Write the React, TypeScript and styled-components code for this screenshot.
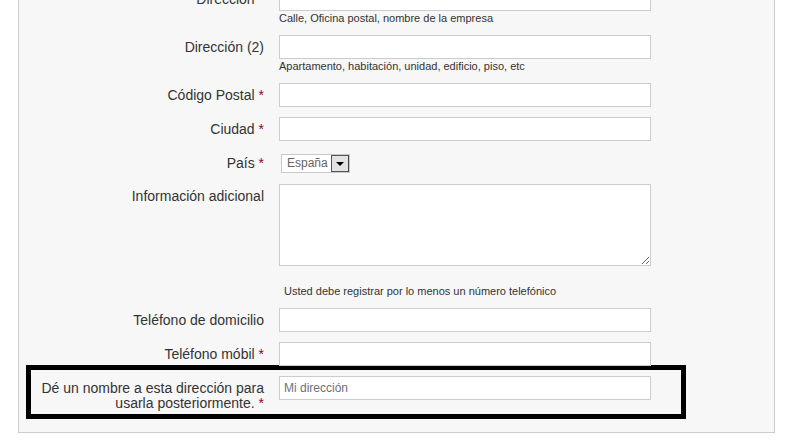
import styled, { createGlobalStyle } from 'styled-components';

const GlobalStyle = createGlobalStyle`
  html, body {
    margin: 0;
    padding: 0;
    background: #fff;
    overflow: hidden;
    font-family: "Liberation Sans", Arial, sans-serif;
  }
`;

const Page = styled.div`
  padding-left: 18px;
`;

const Panel = styled.div`
  box-sizing: border-box;
  width: 757px;
  margin-top: -31px;
  padding: 17px 0 13px;
  background: #f7f7f7;
  border: 1px solid #cccccc;
`;

const Field = styled.div<{ $center?: boolean }>`
  display: grid;
  grid-template-columns: 245px 372px;
  column-gap: 15px;
  align-items: ${(p) => (p.$center ? 'center' : 'start')};
  margin-bottom: 10px;
`;

const Label = styled.label`
  text-align: right;
  font-size: 14px;
  line-height: 24px;
  color: #333;
`;

const Req = styled.span`
  color: #990033;
`;

const Control = styled.div`
  display: flex;
  flex-direction: column;
  align-items: flex-start;
`;

const TextInput = styled.input`
  box-sizing: border-box;
  width: 372px;
  height: 24px;
  margin: 0;
  padding: 0 4px;
  border: 1px solid #cccccc;
  background: #fff;
  font-family: "Liberation Sans", Arial, sans-serif;
  font-size: 12px;
  color: #333;
  outline: none;

  &::placeholder {
    color: #6f6f78;
  }
`;

const TextArea = styled.textarea`
  box-sizing: border-box;
  width: 372px;
  height: 82px;
  margin: 0;
  display: block;
  border: 1px solid #cccccc;
  background: #fff;
  resize: both;
  font-family: "Liberation Sans", Arial, sans-serif;
  font-size: 12px;
  outline: none;
`;

const Help = styled.div`
  font-size: 11px;
  line-height: 14px;
  color: #333;
`;

const Notice = styled(Help)`
  margin: 18px 0 10px 265px;
`;

const SelectBox = styled.div`
  box-sizing: border-box;
  margin-left: 2px;
  height: 19px;
  width: 69px;
  display: flex;
  align-items: center;
  justify-content: space-between;
  padding: 0 0 0 1px;
  border: 1px solid #c8c8c8;
  background: #fff;
`;

const SelectValue = styled.span`
  font-size: 12px;
  color: #666;
  padding-left: 4px;
`;

const SelectArrow = styled.span`
  box-sizing: border-box;
  width: 18px;
  height: 17px;
  display: flex;
  align-items: center;
  justify-content: center;
  background: #e3e3e3;
  border: 1px solid #555;
  border-right-color: #444;

  &::after {
    content: '';
    width: 0;
    height: 0;
    border-left: 4px solid transparent;
    border-right: 4px solid transparent;
    border-top: 4px solid #000;
    margin-top: 2px;
  }
`;

const Highlight = styled.div`
  box-sizing: border-box;
  display: grid;
  grid-template-columns: 233px 372px;
  column-gap: 15px;
  align-items: start;
  width: 660px;
  margin: -11px 0 0 7px;
  padding: 6px 0 3px;
  border: 5px solid #000;
`;

const LongLabel = styled(Label)`
  line-height: 15px;
  padding-top: 5px;
`;

type Row = { label: string; required?: boolean; help?: string };

const topRows: Row[] = [
  { label: 'Dirección', required: true, help: 'Calle, Oficina postal, nombre de la empresa' },
  { label: 'Dirección (2)', help: 'Apartamento, habitación, unidad, edificio, piso, etc' },
  { label: 'Código Postal', required: true },
  { label: 'Ciudad', required: true },
];

const phoneRows: Row[] = [
  { label: 'Teléfono de domicilio' },
  { label: 'Teléfono móbil', required: true },
];

function LabelText({ row }: { row: Row }) {
  return (
    <>
      {row.label}
      {row.required && <Req> *</Req>}
    </>
  );
}

function InputField({ row }: { row: Row }) {
  return (
    <Field>
      <Label>
        <LabelText row={row} />
      </Label>
      <Control>
        <TextInput type="text" />
        {row.help && <Help>{row.help}</Help>}
      </Control>
    </Field>
  );
}

export default function App() {
  return (
    <Page>
      <GlobalStyle />
      <Panel>
        {topRows.map((row) => (
          <InputField key={row.label} row={row} />
        ))}
        <Field $center style={{ height: 23 }}>
          <Label>
            País<Req> *</Req>
          </Label>
          <SelectBox>
            <SelectValue>España</SelectValue>
            <SelectArrow />
          </SelectBox>
        </Field>
        <Field>
          <Label>Información adicional</Label>
          <TextArea />
        </Field>
        <Notice>Usted debe registrar por lo menos un número telefónico</Notice>
        {phoneRows.map((row) => (
          <InputField key={row.label} row={row} />
        ))}
        <Highlight>
          <LongLabel>
            Dé un nombre a esta dirección para usarla posteriormente.<Req> *</Req>
          </LongLabel>
          <TextInput type="text" placeholder="Mi dirección" />
        </Highlight>
      </Panel>
    </Page>
  );
}
